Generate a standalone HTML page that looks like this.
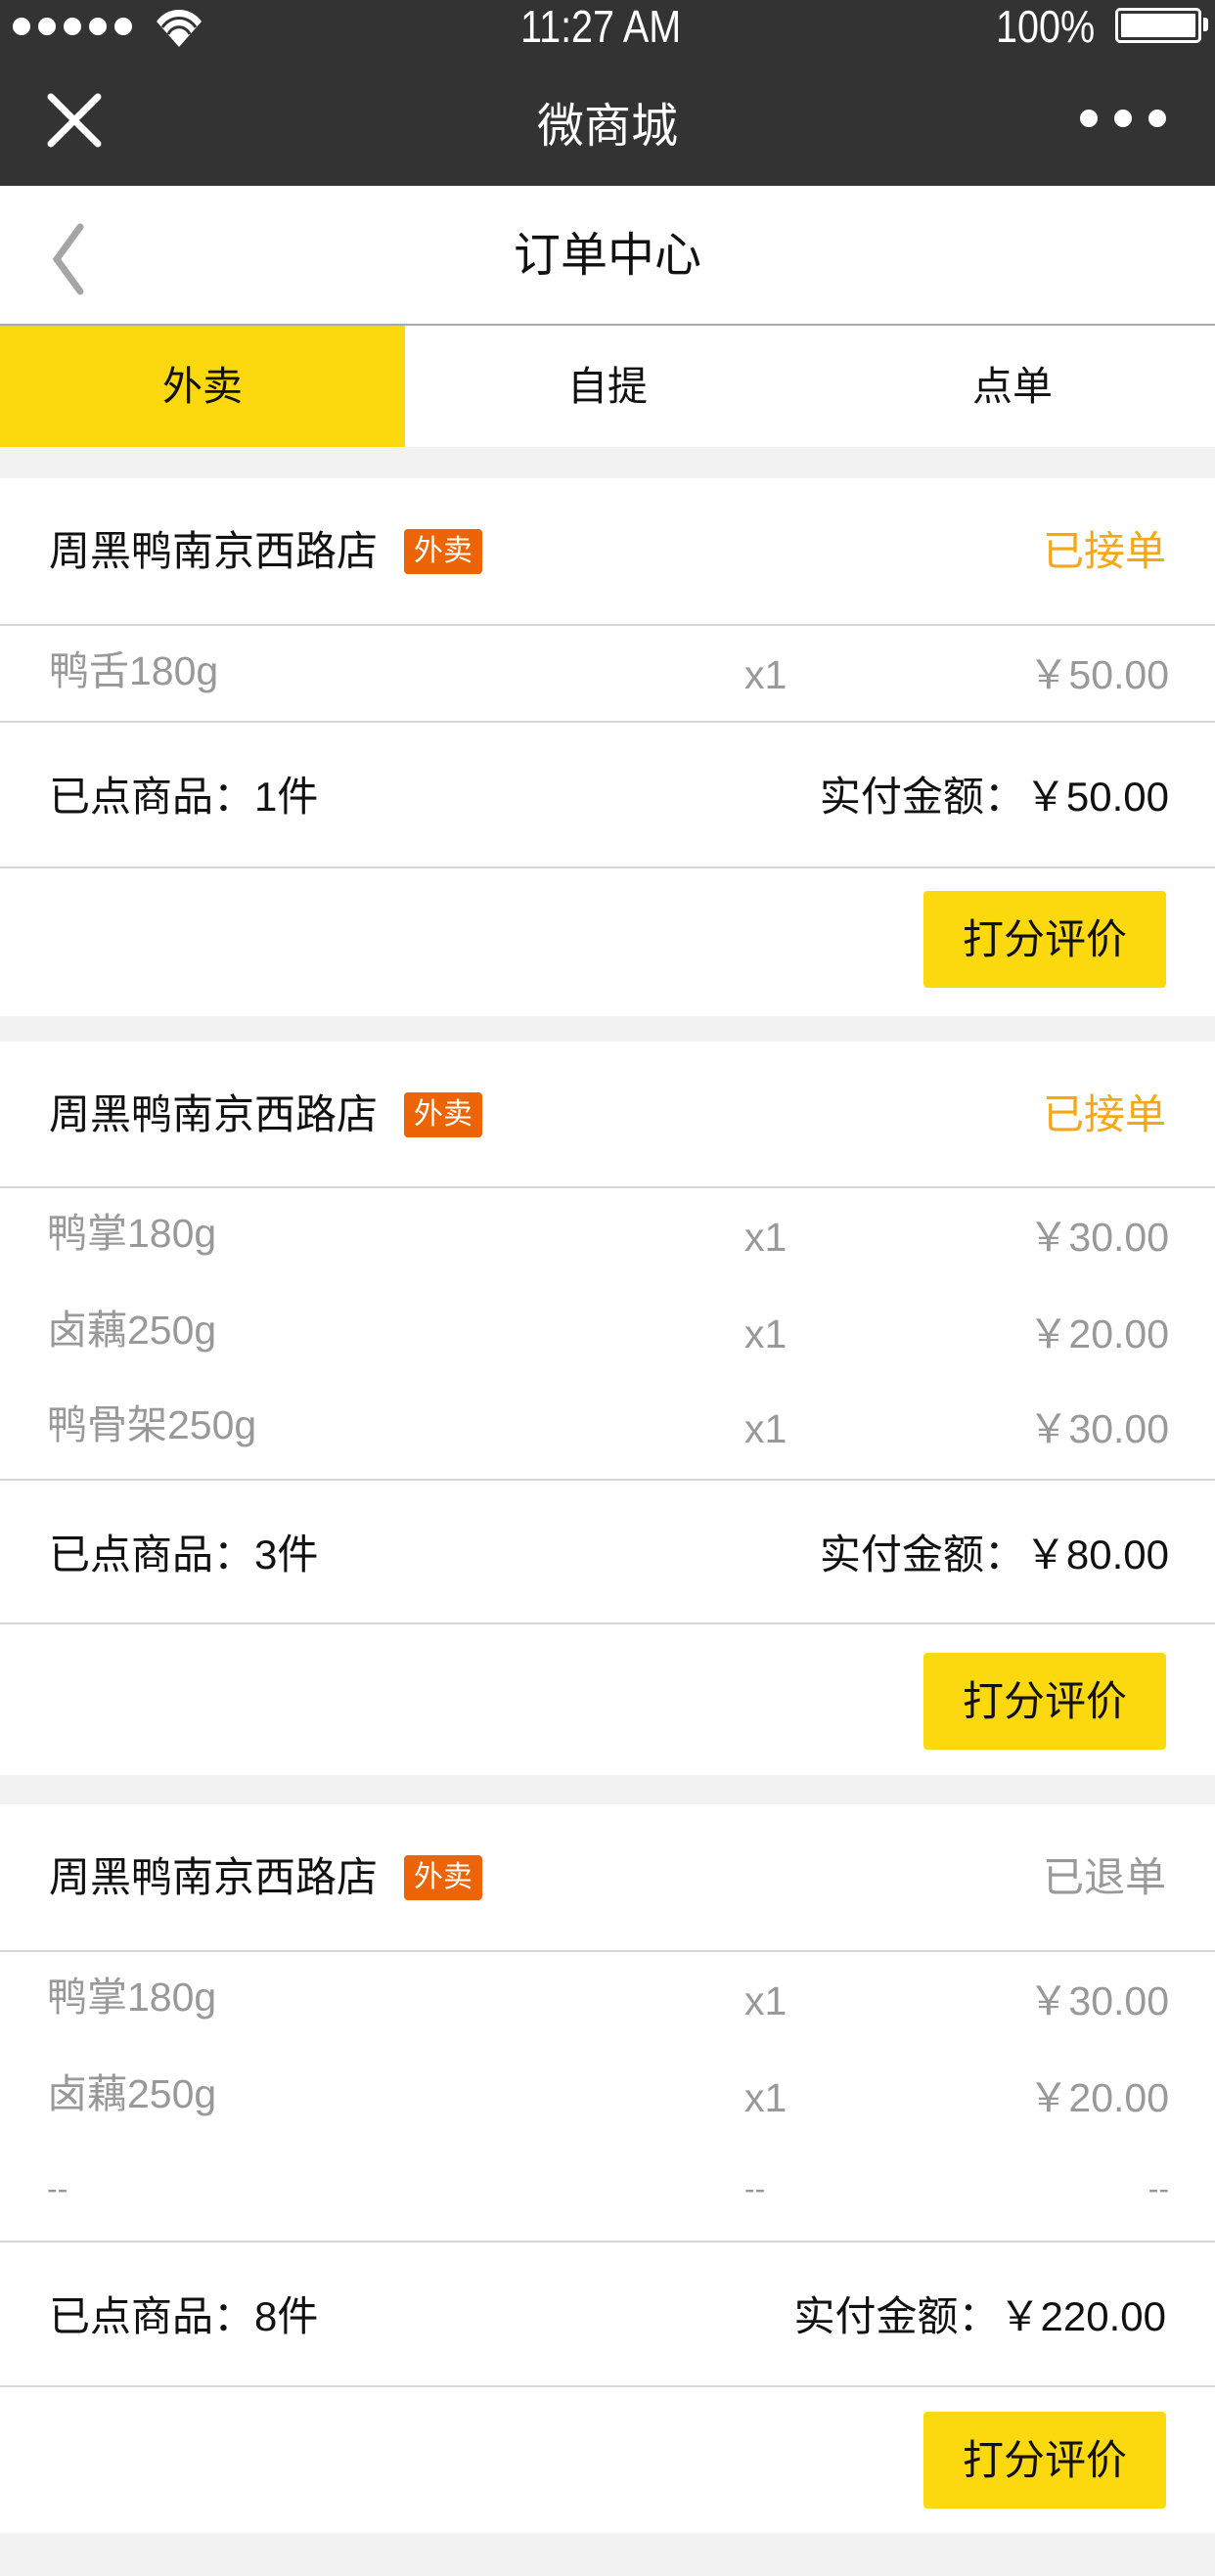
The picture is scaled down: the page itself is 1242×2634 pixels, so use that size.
<!DOCTYPE html>
<html><head><meta charset="utf-8"><style>
*{margin:0;padding:0;box-sizing:border-box}
body{width:1242px;height:2634px;background:#f2f2f2;font-family:"Liberation Sans","Noto Sans CJK SC",sans-serif;position:relative;overflow:hidden}
.a{position:absolute}
.top{left:0;top:0;width:1242px;height:190px;background:#333}
.w{background:#fff;left:0;width:1242px}
.line{left:0;width:1242px;height:2px;background:#d6d6d6}
.t{white-space:nowrap;line-height:1}
.store{font-size:42px;color:#111;left:50px}
.badge{left:413px;width:80px;height:46px;background:#ec6406;color:#fff;font-size:30px;border-radius:4px;text-align:center;line-height:46px}
.st{right:50px;font-size:42px}
.g{color:#999;font-size:41px}
.sum{font-size:42px;color:#111}
.btn{left:944px;width:248px;height:99px;background:#fbd90e;border-radius:4px;font-size:42px;color:#111;text-align:center;line-height:99px}
</style></head><body>
<div class="a top"></div>
<svg class="a" style="left:10px;top:10px" width="210" height="40">
<circle cx="12" cy="17" r="9" fill="#fff"/><circle cx="38" cy="17" r="9" fill="#fff"/><circle cx="64" cy="17" r="9" fill="#fff"/><circle cx="90" cy="17" r="9" fill="#fff"/><circle cx="116" cy="17" r="9" fill="#fff"/>
<path d="M150 12 A28 28 0 0 1 196 12 L173 38 Z" fill="#fff"/>
<path d="M156 18 A20 20 0 0 1 190 18" stroke="#333" stroke-width="3" fill="none"/>
<path d="M162 25 A12 12 0 0 1 184 25" stroke="#333" stroke-width="3" fill="none"/>
</svg>
<div class="a t" style="left:532px;top:4px;font-size:46px;color:#fff;transform:scaleX(.86);transform-origin:left">11:27 AM</div>
<div class="a t" style="left:1018px;top:4px;font-size:46px;color:#fff;transform:scaleX(.86);transform-origin:left">100%</div>
<div class="a" style="left:1140px;top:8px;width:88px;height:36px;border:3px solid #fff;border-radius:5px;padding:3px"><div style="background:#fff;width:100%;height:100%"></div></div>
<div class="a" style="left:1230px;top:18px;width:5px;height:14px;background:#fff;border-radius:0 3px 3px 0"></div>
<svg class="a" style="left:48px;top:95px" width="56" height="56"><path d="M4 4L52 52M52 4L4 52" stroke="#fff" stroke-width="7" stroke-linecap="round"/></svg>
<div class="a t" style="left:0;width:1242px;text-align:center;top:106px;font-size:48px;color:#fff">微商城</div>
<svg class="a" style="left:1100px;top:108px" width="96" height="26"><circle cx="13" cy="13" r="9" fill="#fff"/><circle cx="48" cy="13" r="9" fill="#fff"/><circle cx="83" cy="13" r="9" fill="#fff"/></svg>
<div class="a w" style="top:190px;height:141px"></div>
<svg class="a" style="left:44px;top:228px" width="50" height="74"><path d="M38 4L14 37L38 70" stroke="#a5a5a5" stroke-width="7" fill="none" stroke-linecap="round"/></svg>
<div class="a t" style="left:0;width:1242px;text-align:center;top:238px;font-size:48px;color:#111">订单中心</div>
<div class="a line" style="top:331px;background:#aaa"></div>
<div class="a w" style="top:333px;height:124px"></div>
<div class="a" style="left:0;top:333px;width:414px;height:124px;background:#fbd90e"></div>
<div class="a t" style="left:0;width:414px;text-align:center;top:375px;font-size:41px;color:#111">外卖</div>
<div class="a t" style="left:414px;width:414px;text-align:center;top:375px;font-size:41px;color:#111">自提</div>
<div class="a t" style="left:828px;width:414px;text-align:center;top:375px;font-size:41px;color:#111">点单</div>

<div class="a w" style="top:489px;height:550px"></div>
<div class="a t store" style="top:543px">周黑鸭南京西路店</div>
<div class="a badge t" style="top:541px">外卖</div>
<div class="a t st" style="top:543px;color:#f5a71a">已接单</div>
<div class="a line" style="top:638px"></div>
<div class="a t g" style="left:50px;top:666px">鸭舌180g</div>
<div class="a t g" style="left:761px;top:670px">x1</div>
<div class="a t g" style="right:47px;top:670px">￥50.00</div>
<div class="a line" style="top:737px"></div>
<div class="a t sum" style="left:50px;top:794px">已点商品：1件</div>
<div class="a t sum" style="right:47px;top:794px">实付金额：￥50.00</div>
<div class="a line" style="top:886px"></div>
<div class="a btn t" style="top:911px">打分评价</div>

<div class="a w" style="top:1065px;height:750px"></div>
<div class="a t store" style="top:1119px">周黑鸭南京西路店</div>
<div class="a badge t" style="top:1117px">外卖</div>
<div class="a t st" style="top:1119px;color:#f5a71a">已接单</div>
<div class="a line" style="top:1213px"></div>
<div class="a t g" style="left:48px;top:1241px">鸭掌180g</div>
<div class="a t g" style="left:761px;top:1245px">x1</div>
<div class="a t g" style="right:47px;top:1245px">￥30.00</div>
<div class="a t g" style="left:48px;top:1340px">卤藕250g</div>
<div class="a t g" style="left:761px;top:1344px">x1</div>
<div class="a t g" style="right:47px;top:1344px">￥20.00</div>
<div class="a t g" style="left:48px;top:1437px">鸭骨架250g</div>
<div class="a t g" style="left:761px;top:1441px">x1</div>
<div class="a t g" style="right:47px;top:1441px">￥30.00</div>
<div class="a line" style="top:1512px"></div>
<div class="a t sum" style="left:50px;top:1569px">已点商品：3件</div>
<div class="a t sum" style="right:47px;top:1569px">实付金额：￥80.00</div>
<div class="a line" style="top:1659px"></div>
<div class="a btn t" style="top:1690px">打分评价</div>

<div class="a w" style="top:1845px;height:745px"></div>
<div class="a t store" style="top:1899px">周黑鸭南京西路店</div>
<div class="a badge t" style="top:1897px">外卖</div>
<div class="a t st" style="top:1899px;color:#999">已退单</div>
<div class="a line" style="top:1994px"></div>
<div class="a t g" style="left:48px;top:2022px">鸭掌180g</div>
<div class="a t g" style="left:761px;top:2026px">x1</div>
<div class="a t g" style="right:47px;top:2026px">￥30.00</div>
<div class="a t g" style="left:48px;top:2121px">卤藕250g</div>
<div class="a t g" style="left:761px;top:2125px">x1</div>
<div class="a t g" style="right:47px;top:2125px">￥20.00</div>
<div class="a t g" style="left:48px;top:2222px;font-size:32px">--</div>
<div class="a t g" style="left:761px;top:2222px;font-size:32px">--</div>
<div class="a t g" style="right:47px;top:2222px;font-size:32px">--</div>
<div class="a line" style="top:2291px"></div>
<div class="a t sum" style="left:50px;top:2348px">已点商品：8件</div>
<div class="a t sum" style="right:50px;top:2348px">实付金额：￥220.00</div>
<div class="a line" style="top:2439px"></div>
<div class="a btn t" style="top:2466px">打分评价</div>
</body></html>
